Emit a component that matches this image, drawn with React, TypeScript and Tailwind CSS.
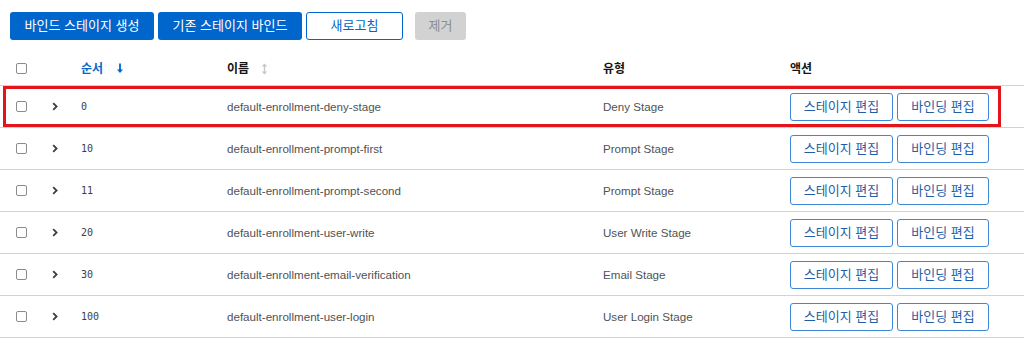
import React from "react";

const rows = [
  { n: "0", name: "default-enrollment-deny-stage", type: "Deny Stage" },
  { n: "10", name: "default-enrollment-prompt-first", type: "Prompt Stage" },
  { n: "11", name: "default-enrollment-prompt-second", type: "Prompt Stage" },
  { n: "20", name: "default-enrollment-user-write", type: "User Write Stage" },
  { n: "30", name: "default-enrollment-email-verification", type: "Email Stage" },
  { n: "100", name: "default-enrollment-user-login", type: "User Login Stage" },
];

const font = { fontFamily: '"Liberation Sans", "Noto Sans CJK KR", sans-serif' };

function Checkbox() {
  return <div className="w-[11px] h-[11px] rounded-[2px] border border-[#8a8d90] bg-white" />;
}

function Chevron() {
  return (
    <svg width="6" height="9" viewBox="0 0 6 9" className="block">
      <path d="M1.2 1.2 L4.6 4.5 L1.2 7.8" fill="none" stroke="#3c3f42" strokeWidth="1.8" />
    </svg>
  );
}

export default function App() {
  return (
    <div className="w-[1024px] h-[353px] bg-white overflow-hidden text-[#151515]" style={font}>
      <div className="flex items-center pt-[12px] pl-[10px]">
        <button className="w-[144px] h-[28px] rounded-[3px] bg-[#0066cc] text-white text-[13px]">바인드 스테이지 생성</button>
        <button className="ml-[4px] w-[144px] h-[28px] rounded-[3px] bg-[#0066cc] text-white text-[13px]">기존 스테이지 바인드</button>
        <button className="ml-[4px] w-[97px] h-[28px] rounded-[3px] border border-[#0066cc] text-[#0066cc] text-[13px] bg-white">새로고침</button>
        <button className="ml-[12px] w-[51px] h-[28px] rounded-[3px] bg-[#d2d2d2] text-[#8a8d90] text-[13px]">제거</button>
      </div>

      <div className="mt-[12px] h-[34px] grid grid-cols-[36px_29px_146px_376px_187px_1fr] items-center pl-[16px] border-b border-[#d2d2d2] text-[12px] font-semibold">
        <Checkbox />
        <div />
        <div className="flex items-center text-[#0066cc]">
          <span>순서</span>
          <svg width="8" height="11" viewBox="0 0 8 11" className="ml-[13px]">
            <path d="M4 0.5 V9" stroke="#0066cc" strokeWidth="1.8" />
            <path d="M1 6.5 L4 10 L7 6.5 Z" fill="#0066cc" />
          </svg>
        </div>
        <div className="flex items-center">
          <span>이름</span>
          <svg width="7" height="12" viewBox="0 0 7 12" className="ml-[12px]">
            <path d="M3.5 1.5 V10.5" stroke="#c7c7c7" strokeWidth="1.4" />
            <path d="M0.8 3.5 L3.5 0.5 L6.2 3.5 Z" fill="#c7c7c7" />
            <path d="M0.8 8.5 L3.5 11.5 L6.2 8.5 Z" fill="#c7c7c7" />
          </svg>
        </div>
        <div>유형</div>
        <div>액션</div>
      </div>

      {rows.map((r, i) => (
        <div
          key={r.n}
          className="relative h-[42px] grid grid-cols-[36px_29px_146px_376px_187px_1fr] items-center pl-[16px] border-b border-[#d2d2d2]"
        >
          <Checkbox />
          <Chevron />
          <div className="text-[10px] text-[#3c3f42]" style={{ fontFamily: '"DejaVu Sans Mono", monospace' }}>{r.n}</div>
          <div className="text-[11.6px] text-[#4f5255]">{r.name}</div>
          <div className="text-[11.6px] text-[#4f5255]">{r.type}</div>
          <div className="flex items-center">
            <button className="w-[103px] h-[28px] rounded-[3px] border border-[#3d87d4] text-[#1f5fa8] text-[13px] bg-white">스테이지 편집</button>
            <button className="ml-[4px] w-[92px] h-[28px] rounded-[3px] border border-[#3d87d4] text-[#1f5fa8] text-[13px] bg-white">바인딩 편집</button>
          </div>
          {i === 0 && (
            <div className="absolute left-[3px] top-0 w-[998px] h-[41px] border-[3px] border-[#e3151a] pointer-events-none" />
          )}
        </div>
      ))}
    </div>
  );
}
